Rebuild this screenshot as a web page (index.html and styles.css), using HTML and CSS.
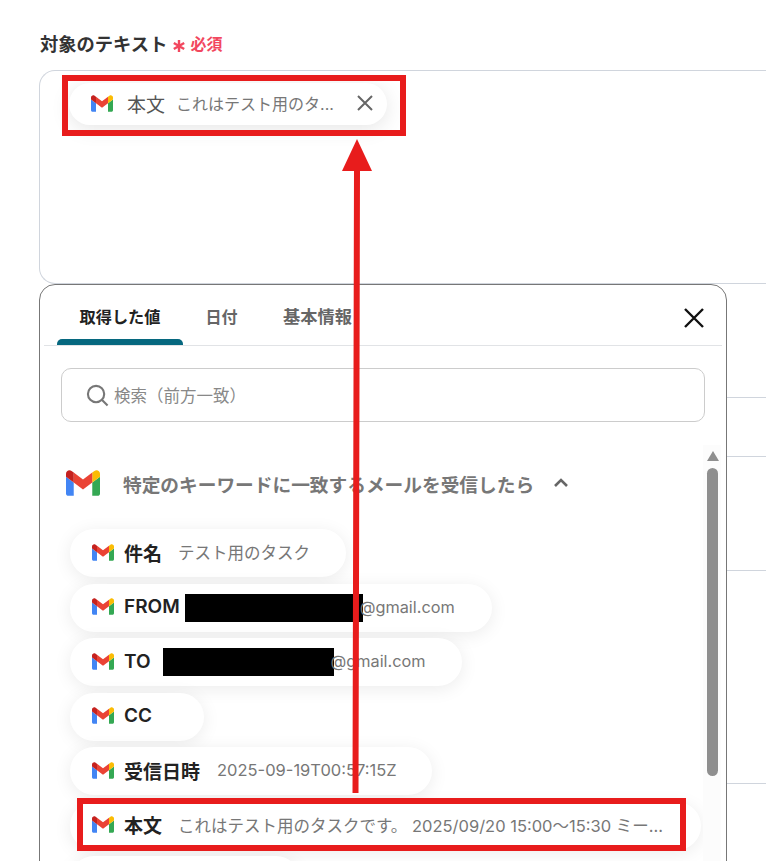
FILE: index.html
```html
<!DOCTYPE html>
<html lang="ja">
<head>
<meta charset="utf-8">
<title>対象のテキスト</title>
<link rel="stylesheet" href="styles.css">
</head>
<body>
<svg class="defs" width="0" height="0" aria-hidden="true">
  <symbol id="gmail" viewBox="52 42 88 66">
    <path fill="#4285f4" d="M58 108h14V74L52 59v43c0 3.32 2.69 6 6 6"/>
    <path fill="#34a853" d="M120 108h14c3.32 0 6-2.69 6-6V59l-20 15"/>
    <path fill="#fbbc04" d="M120 48v26l20-15v-8c0-7.42-8.47-11.65-14.4-7.2"/>
    <path fill="#ea4335" d="M72 74V48l24 18 24-18v26L96 92"/>
    <path fill="#c5221f" d="M52 51v8l20 15V48l-5.6-4.2c-5.94-4.45-14.4-.22-14.4 7.2"/>
  </symbol>
</svg>
<div class="page">
  <div class="field-label">
    <span>対象のテキスト</span>
    <svg class="asterisk" viewBox="0 0 14 14"><path d="M7 1v12M1.8 4l10.4 6M12.2 4L1.8 10"/></svg>
    <span class="required">必須</span>
  </div>
  <div class="textarea">
    <div class="chip chip-selected">
      <svg class="gm"><use href="#gmail"/></svg>
      <span class="chip-name-light">本文</span>
      <span class="chip-value chip-value-clip">これはテスト用のタ...</span>
      <svg class="chip-x" viewBox="0 0 18 18"><path d="M2 2l14 14M16 2L2 16"/></svg>
    </div>
  </div>
  <div class="bg-rows">
    <div class="bg-row r1"></div>
    <div class="bg-row r2"></div>
    <div class="bg-row r3"></div>
    <div class="bg-row r4"></div>
  </div>

  <section class="panel">
    <div class="tabs">
      <div class="tab tab-active">取得した値</div>
      <div class="tab">日付</div>
      <div class="tab tab-wide">基本情報</div>
      <svg class="close" viewBox="0 0 22 22"><path d="M2 2l18 18M20 2L2 20"/></svg>
    </div>
    <div class="search">
      <svg class="search-icon" viewBox="0 0 24 24"><circle cx="10.5" cy="10.5" r="8.5"/><path d="M16.5 16.5l6 6"/></svg>
      <span>検索（前方一致）</span>
    </div>
    <div class="list-wrap">
      <div class="group">
        <svg class="gm-lg"><use href="#gmail"/></svg>
        <span class="group-title">特定のキーワードに一致するメールを受信したら</span>
        <svg class="chev" viewBox="0 0 16 10"><path d="M2 8l6-6 6 6"/></svg>
      </div>
      <div class="chips">
        <div class="chip c-subject"><svg class="gm"><use href="#gmail"/></svg><b>件名</b><span class="chip-value gap-l">テスト用のタスク</span></div>
        <div class="chip c-from"><svg class="gm"><use href="#gmail"/></svg><b>FROM</b><i class="redact redact-from"></i><span class="chip-value mail">@gmail.com</span></div>
        <div class="chip c-to"><svg class="gm"><use href="#gmail"/></svg><b>TO</b><i class="redact redact-to"></i><span class="chip-value mail">@gmail.com</span></div>
        <div class="chip c-cc"><svg class="gm"><use href="#gmail"/></svg><b>CC</b></div>
        <div class="chip c-date"><svg class="gm"><use href="#gmail"/></svg><b>受信日時</b><span class="chip-value gap-date">2025-09-19T00:57:15Z</span></div>
        <div class="chip c-body"><svg class="gm"><use href="#gmail"/></svg><b>本文</b><span class="chip-value gap-l">これはテスト用のタスクです。 2025/09/20 15:00〜15:30 ミー...</span></div>
        <div class="chip c-next"></div>
      </div>
      <div class="scrollbar">
        <div class="scroll-up"></div>
        <div class="scroll-thumb"></div>
      </div>
    </div>
  </section>

  <div class="mark mark-top"></div>
  <div class="mark mark-bottom"></div>
  <svg class="arrow" viewBox="0 0 32 660"><path d="M16 0L31 32H19L17.500 654H11.500L13 32H1z"/></svg>
</div>
</body>
</html>
```
FILE: styles.css
```css
* { box-sizing: border-box; }
html, body { margin: 0; height: 100%; overflow: hidden; background: #fff; }
body { font-family: Inter, "Noto Sans CJK JP", sans-serif; color: #222; }
.defs { position: absolute; }
.page { position: relative; height: 861px; padding: 29px 0 0 39px; overflow: hidden; }

.field-label { display: flex; align-items: center; height: 28px; padding-left: 1px; font-size: 18.3px; font-weight: 600; color: #333; }
.asterisk { width: 14px; height: 14px; margin: 6px 0 0 5px; fill: none; stroke: #f2475e; stroke-width: 2.4; }
.required { margin-left: 4px; font-size: 16px; font-weight: 600; color: #f2475e; }

.textarea { margin-top: 13px; width: 760px; height: 214px; padding: 12px 0 0 29px; border: 1px solid #d0d5dd; border-right: 0; border-radius: 16px 0 0 16px; }

.bg-rows { margin-top: -1px; }
.bg-row { border-bottom: 1px solid #d0d5dd; }
.r1 { height: 115px; }
.r2 { height: 59px; }
.r3 { height: 114px; }
.r4 { height: 213px; }

.chip { display: flex; align-items: center; height: 48px; padding: 0 0 2px 22px; border-radius: 24px; background: #fff; box-shadow: 0 3px 18px rgba(0, 0, 0, .08); white-space: nowrap; font-size: 19px; }
.chip b { margin-left: 10px; font-weight: 600; color: #222; }
.chip-value { font-size: 16.5px; color: #777; }
.gm { width: 22px; height: 17px; flex: none; }
.gap-l { margin-left: 16px; }
.gap-date { margin-left: 17px; }

.chip-selected { width: 318px; height: 42px; padding-left: 22px; border-radius: 21px; box-shadow: 0 4px 20px rgba(0, 0, 0, .1); }
.chip-name-light { margin-left: 14px; color: #555; font-weight: 400; }
.chip-value-clip { margin-left: 11px; font-size: 16px; }
.chip-x { width: 18px; height: 18px; margin-left: 22px; fill: none; stroke: #666; stroke-width: 2; }

.panel { position: absolute; left: 39px; top: 284px; width: 688px; height: 590px; padding: 0 4px; background: #fff; border: 1px solid #777; border-radius: 16px 16px 0 0; }
.tabs { position: relative; display: flex; height: 61px; padding-left: 13px; border-bottom: 1px solid #e1e3e6; }
.tab { display: flex; justify-content: center; padding-top: 19px; width: 77px; font-size: 16px; font-weight: 600; color: #666; }
.tab-active { position: relative; width: 126px; font-size: 16.200px; color: #222; }
.tab-wide { width: 115px; font-size: 17.200px; padding-top: 18px; }
.tab-active::after { content: ""; position: absolute; left: 0; right: 0; bottom: 0; height: 6px; border-radius: 5px 5px 0 0; background: #06687f; }
.close { position: absolute; right: 17px; top: 22px; width: 22px; height: 22px; fill: none; stroke: #111; stroke-width: 2.4; }

.search { display: flex; align-items: center; gap: 5px; width: 644px; height: 54px; margin: 22px 0 0 17px; padding-left: 24px; border: 1px solid #ccc; border-radius: 10px; font-size: 16.500px; color: #888; }
.search-icon { width: 23px; height: 23px; fill: none; stroke: #777; stroke-width: 2.2; }

.list-wrap { position: relative; padding: 47px 0 0 26px; }
.group { display: flex; align-items: center; height: 28px; margin-left: -4px; }
.gm-lg { width: 34px; height: 26px; flex: none; }
.group-title { margin-left: 23px; font-size: 18.700px; font-weight: 600; color: #777; }
.chev { width: 16px; height: 10px; margin-left: 19px; fill: none; stroke: #666; stroke-width: 2.6; }

.chips { display: flex; flex-direction: column; gap: 6.5px; margin-top: 32px; }
.c-subject { width: 276px; }
.c-from { width: 422px; }
.c-to { width: 392px; }
.c-cc { width: 134px; }
.c-date { width: 362px; }
.c-body { width: 631px; }
.c-next { width: 230px; flex: none; }

.redact { display: block; height: 28px; margin-top: 2px; background: #000; flex: none; }
.redact-from { width: 178px; margin-left: 5px; }
.redact-to { width: 171px; margin-left: 12px; }
.mail { font-size: 16.300px; margin-left: -3px; }

.scrollbar { position: absolute; right: 1px; top: 23px; width: 18px; height: 420px; background: #fcfcfc; }
.scroll-up { width: 0; margin: 6px 0 0 4px; border: 6px solid transparent; border-top: 0; border-bottom: 10px solid #8f8f8f; }
.scroll-thumb { width: 11px; height: 308px; margin: 7px 0 0 4px; border-radius: 6px; background: #8f8f8f; }

.mark { position: absolute; border: 6px solid #e81c1c; }
.mark-top { left: 62px; top: 75px; width: 344px; height: 61px; }
.mark-bottom { left: 77px; top: 798px; width: 609px; height: 53px; }
.arrow { position: absolute; left: 341px; top: 139px; width: 32px; height: 660px; fill: #e81c1c; }
```
